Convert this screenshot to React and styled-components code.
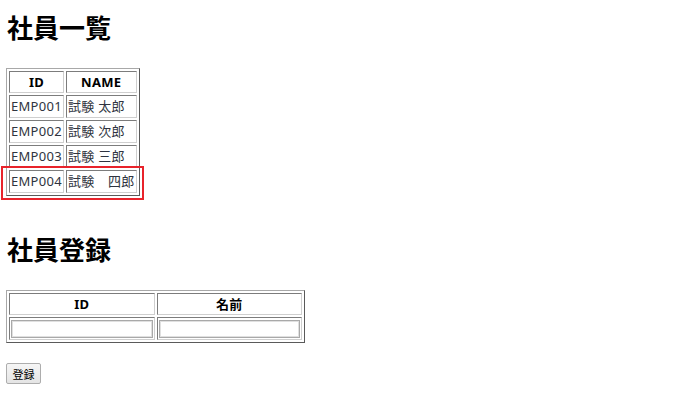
import styled, { createGlobalStyle } from 'styled-components';

const GlobalStyle = createGlobalStyle`
  html, body {
    margin: 0;
    padding: 0;
    background: #fff;
  }
  body {
    font-family: "Noto Sans", "Noto Sans CJK JP", sans-serif;
    font-size: 13px;
    color: #2f3440;
  }
`;

const employees = [
  { id: 'EMP001', name: '試験 太郎' },
  { id: 'EMP002', name: '試験 次郎' },
  { id: 'EMP003', name: '試験 三郎' },
  { id: 'EMP004', name: '試験　四郎', selected: true },
];

const Page = styled.main`
  display: flex;
  flex-direction: column;
  align-items: flex-start;
  padding: 0 6px;
`;

const Heading = styled.h1`
  margin: ${({ $top }) => $top}px 0 ${({ $bottom }) => $bottom}px 1px;
  font-family: "Noto Sans CJK JP", sans-serif;
  font-size: 26px;
  line-height: 30px;
  font-weight: 700;
  color: #000;
`;

const TableWrap = styled.div`
  position: relative;
`;

const Highlight = styled.div`
  position: absolute;
  left: -5px;
  bottom: -4px;
  width: 143px;
  height: 34px;
  box-sizing: border-box;
  border: 2px solid #e8232b;
  pointer-events: none;
`;

const Table = styled.table`
  border-collapse: separate;
  border-spacing: 2px;
  border: 1px solid;
  border-color: #a8a8a8 #5a5a5a #5a5a5a #a8a8a8;
  width: ${({ $width }) => ($width ? `${$width}px` : 'auto')};
  table-layout: ${({ $width }) => ($width ? 'fixed' : 'auto')};
`;

const Th = styled.th`
  border: 1px solid;
  border-color: #7c7c7c #cfcfcf #cfcfcf #7c7c7c;
  padding: 1px 1px;
  height: 18px;
  line-height: 18px;
  font-weight: 700;
  color: #000;
  text-align: center;
  white-space: nowrap;
  letter-spacing: 0.3px;
`;

const Td = styled.td`
  border: 1px solid;
  border-color: #7c7c7c #cfcfcf #cfcfcf #7c7c7c;
  padding: 1px 1px;
  height: 19px;
  line-height: 19px;
  white-space: pre;
  letter-spacing: 0.3px;
`;

const Input = styled.input`
  display: block;
  box-sizing: border-box;
  width: 100%;
  height: 18px;
  margin: 0;
  border: 1px solid #a9a9a9;
  box-shadow: inset 0 0 0 1px #e0e0e0;
  background: #fff;
  font: inherit;
`;

const SubmitButton = styled.button`
  margin-top: 20px;
  width: 35px;
  height: 21px;
  padding: 0;
  border: 1px solid #adadad;
  border-radius: 2px;
  background: linear-gradient(#f6f6f6, #e4e4e4);
  font-family: "Noto Sans CJK JP", sans-serif;
  font-size: 11px;
  color: #000;
`;

export default function App() {
  return (
    <>
      <GlobalStyle />
      <Page>
        <Heading $top={12} $bottom={26}>社員一覧</Heading>
        <TableWrap>
          <Table>
            <thead>
              <tr>
                <Th>ID</Th>
                <Th>NAME</Th>
              </tr>
            </thead>
            <tbody>
              {employees.map((e) => (
                <tr key={e.id}>
                  <Td>{e.id}</Td>
                  <Td>{e.name}</Td>
                </tr>
              ))}
            </tbody>
          </Table>
          <Highlight />
        </TableWrap>

        <Heading $top={38} $bottom={26}>社員登録</Heading>
        <Table $width={299}>
          <thead>
            <tr>
              <Th>ID</Th>
              <Th>名前</Th>
            </tr>
          </thead>
          <tbody>
            <tr>
              <Td><Input type="text" name="id" /></Td>
              <Td><Input type="text" name="name" /></Td>
            </tr>
          </tbody>
        </Table>
        <SubmitButton type="submit">登録</SubmitButton>
      </Page>
    </>
  );
}
